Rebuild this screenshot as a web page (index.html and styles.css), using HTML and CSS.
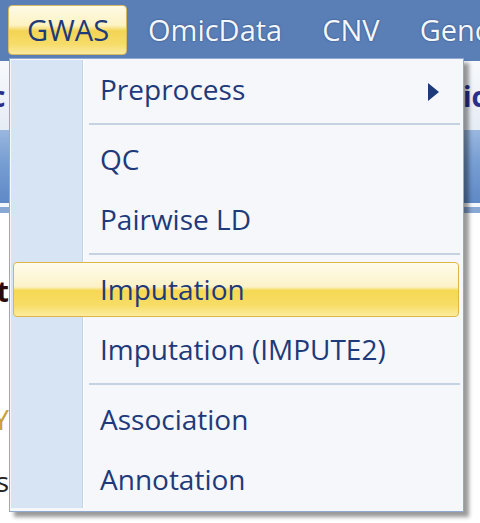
FILE: index.html
```html
<!DOCTYPE html>
<html>
<head>
<meta charset="utf-8">
<link rel="stylesheet" href="styles.css">
</head>
<body>
<div class="app">
  <div class="menubar">
    <div class="mb-item active">GWAS</div>
    <div class="mb-item">OmicData</div>
    <div class="mb-item">CNV</div>
    <div class="mb-item">Genotype</div>
  </div>
  <div class="panel">
    <span class="panel-left">c</span>
    <span class="panel-right">ic</span>
  </div>
  <div class="toolbar"></div>
  <div class="toolbar-gap"></div>
  <div class="toolbar-strip"></div>
  <div class="content">
    <div class="edge">
      <div class="edge-line bold">Result</div>
      <div class="edge-line colored">Y</div>
      <div class="edge-line">s</div>
    </div>
  </div>

  <div class="menu">
    <div class="item">Preprocess<span class="arrow"></span></div>
    <div class="sep"></div>
    <div class="item">QC</div>
    <div class="item">Pairwise LD</div>
    <div class="sep"></div>
    <div class="item hot">Imputation</div>
    <div class="item">Imputation (IMPUTE2)</div>
    <div class="sep"></div>
    <div class="item">Association</div>
    <div class="item">Annotation</div>
  </div>
</div>
</body>
</html>
```

FILE: styles.css
```css
html, body {
  margin: 0;
  padding: 0;
  background: #ffffff;
}
body {
  width: 480px;
  height: 523px;
  overflow: hidden;
  font-family: "Open Sans", "Noto Sans", sans-serif;
}
.app {
  position: relative;
  width: 480px;
  height: 523px;
  overflow: hidden;
}
.menubar {
  height: 61px;
  box-sizing: border-box;
  padding: 5px 0 0 8px;
  background: #5a7fb7;
  display: flex;
  align-items: flex-start;
  white-space: nowrap;
  overflow: hidden;
}
.mb-item {
  flex-shrink: 0;
  height: 50px;
  line-height: 50px;
  font-size: 29px;
  padding: 0 20px;
  color: #f4f7fc;
  text-shadow: 0 0 2px rgba(25, 45, 90, 0.7);
  box-sizing: border-box;
}
.mb-item.active {
  padding: 0 0 0 18px;
  width: 119px;
  margin-right: 1px;
  color: #1f3a78;
  text-shadow: none;
  border: 1px solid #d6b960;
  border-radius: 4px;
  line-height: 48px;
  background: linear-gradient(to bottom, #fefbe6 0%, #fdf2c2 40%, #f3d453 52%, #f6dc6a 80%, #fbeaa0 100%);
}
.panel {
  height: 69px;
  background: linear-gradient(to bottom, #f7f9fc, #e6ecf5);
  display: flex;
  justify-content: space-between;
  align-items: center;
  font-size: 28px;
  font-weight: bold;
  color: #2b2f8c;
  overflow: hidden;
}
.panel-left {
  margin-left: -9px;
}
.panel-right {
  margin-right: -6px;
}
.toolbar {
  height: 73px;
  background: linear-gradient(to bottom, #9ab7df 0%, #7aa0d4 40%, #5f89c6 100%);
}
.toolbar-gap {
  height: 4px;
  background: #f4f7fb;
}
.toolbar-strip {
  height: 6px;
  background: #8aa8d4;
}
.content {
  display: flex;
}
.edge {
  width: 9px;
  overflow: hidden;
  display: flex;
  flex-direction: column;
  padding-top: 47px;
}
.edge-line {
  display: flex;
  justify-content: flex-end;
  white-space: nowrap;
  font-size: 28px;
  height: 62px;
  line-height: 62px;
  color: #222;
}
.edge-line.bold {
  font-weight: bold;
  color: #2a0a10;
  height: 128px;
  line-height: 62px;
}
.edge-line.colored {
  color: #c9a040;
}
.menu {
  position: absolute;
  left: 9px;
  top: 58px;
  width: 455px;
  box-sizing: border-box;
  border: 1px solid #8fa9d2;
  padding: 0 1px 2px 1px;
  background: #f5f7fa;
  box-shadow: 5px 5px 4px rgba(0, 0, 0, 0.4);
  display: flex;
  flex-direction: column;
}
.menu::before {
  content: "";
  position: absolute;
  left: 1px;
  top: 1px;
  bottom: 3px;
  width: 73px;
  background: linear-gradient(to right, #d6e4f3 0, #d6e4f3 71px, #c3d3e6 71px, #c3d3e6 72px, #ffffff 72px);
}
.item {
  position: relative;
  isolation: isolate;
  height: 60px;
  line-height: 60px;
  padding-left: 89px;
  font-size: 28px;
  color: #1f3a7a;
  display: flex;
  align-items: center;
  white-space: nowrap;
}
.item.hot::before {
  content: "";
  position: absolute;
  left: 2px;
  right: 3px;
  top: 3px;
  bottom: 2px;
  z-index: -1;
  border: 1px solid #e0b548;
  border-radius: 4px;
  background: linear-gradient(to bottom, #fefcec 0%, #fcf2c8 45%, #f5d852 52%, #f7dd68 80%, #fcec9e 100%);
}
.arrow {
  margin-left: auto;
  margin-right: 23px;
  margin-top: 6px;
  width: 0;
  height: 0;
  border-top: 9px solid transparent;
  border-bottom: 9px solid transparent;
  border-left: 11px solid #1c3a7a;
}
.sep {
  position: relative;
  height: 10px;
  margin: 0 2px 0 78px;
  background: linear-gradient(to bottom, transparent 0, transparent 4px, #c5d2e2 4px, #c5d2e2 6px, transparent 6px);
}
```
